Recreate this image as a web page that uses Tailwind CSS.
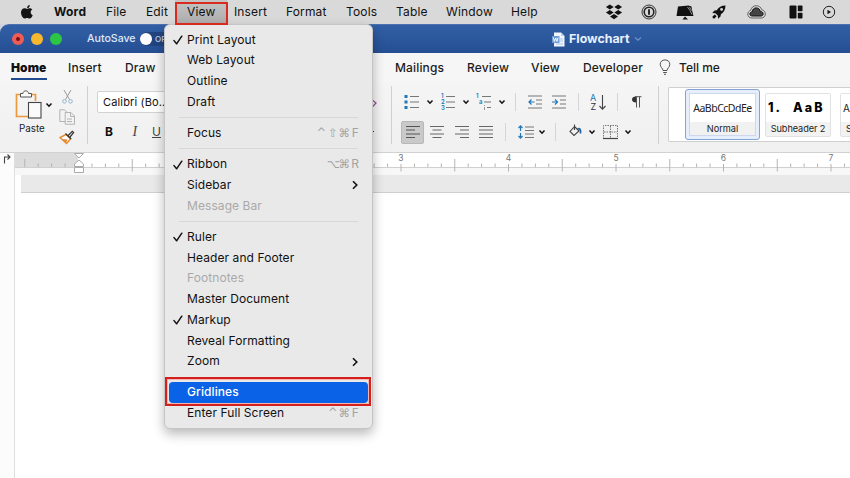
<!DOCTYPE html>
<html lang="en">
<head>
<meta charset="utf-8">
<title>Flowchart</title>
<script src="https://cdn.jsdelivr.net/npm/@tailwindcss/browser@4"></script>
</head>
<body class="w-[850px] h-[478px] overflow-hidden bg-white text-[#111] font-['Inter','Liberation_Sans',sans-serif] relative">
<svg class="hidden">
  <symbol id="chev" viewBox="0 0 8 6"><path d="M1.5 1.5 4 4.2 6.5 1.5" fill="none" stroke="#111" stroke-width="1.5"/></symbol>
  <symbol id="check" viewBox="0 0 10 10"><path d="M1 5.6 3.6 8.8 8.8 1.2" fill="none" stroke="#111" stroke-width="1.5" stroke-linecap="round" stroke-linejoin="round"/></symbol>
  <symbol id="sub" viewBox="0 0 6 10"><path d="M1 1.2 4.8 5 1 8.8" fill="none" stroke="#111" stroke-width="1.6"/></symbol>
</svg>

<!-- System menu bar -->
<header class="h-6 bg-[#d9d9d9] flex items-center text-[12px] tracking-[0.15px] leading-6 whitespace-nowrap">
  <svg class="ml-[20px] mr-[20px] w-[14px] h-4 shrink-0 -mt-px" viewBox="0 0 14 16"><path d="M9.8 1C8.300 1.100 6.900 2.500 7.100 4.200 8.700 4.200 9.900 2.700 9.800 1ZM7.200 5C6.500 5 5.600 4.300 4.500 4.300 2.600 4.300 1 5.900 1 8.600 1 11.400 2.900 14.600 4.600 14.600 5.500 14.600 6 14 7.100 14 8.200 14 8.600 14.600 9.500 14.600 11 14.600 12.300 12.400 12.700 11.200 11.500 10.700 10.700 9.700 10.700 8.300 10.700 7.100 11.300 6.200 12.300 5.600 11.600 4.700 10.600 4.300 9.700 4.300 8.600 4.300 7.900 5 7.200 5Z" fill="#151515"/></svg>
  <span class="w-[52px] font-bold tracking-[0.200px]">Word</span>
  <span class="w-[40px]">File</span>
  <span class="w-[29px]">Edit</span>
  <span class="w-[52px] h-6 mr-[7px] pl-[12px] bg-linear-to-b from-[#c4c4c4] to-[#adadad]">View</span>
  <span class="w-[52px]">Insert</span>
  <span class="w-[60px]">Format</span>
  <span class="w-[50px]">Tools</span>
  <span class="w-[50px]">Table</span>
  <span class="w-[65px]">Window</span>
  <span class="w-[94px]">Help</span>
  <svg class="w-[18px] h-[16px] shrink-0" viewBox="0 0 18 16" fill="#111"><path d="M4.800 0.500 8.700 3 4.800 5.500 0.900 3ZM13.200 0.500 17.100 3 13.200 5.500 9.300 3ZM4.800 5.900 8.700 8.400 4.800 10.900 0.900 8.400ZM13.200 5.900 17.100 8.400 13.200 10.900 9.300 8.400ZM9 10 13 12.600 9 15.200 5 12.600Z"/></svg>
  <svg class="ml-[18px] w-4 h-4 shrink-0" viewBox="0 0 16 16" fill="none" stroke="#222"><circle cx="8" cy="8" r="7" stroke-width=".9"/><circle cx="8" cy="8" r="4.800" stroke-width="1.600"/><path d="M8 5.200v5.600" stroke-width="1.900"/></svg>
  <svg class="ml-[19px] w-[18px] h-4 shrink-0" viewBox="0 0 18 16" fill="#111"><path d="M2 2.500 12.500 1.500 15.500 2.500 16 6 17.500 12 11.500 12 .500 12Z"/><path d="M6.500 15.500 9 12.500 12 15.500Z"/><path d="M11.500 3 14 6.500 16 10.500M13.500 3 15.500 6.500" stroke="#ccc" stroke-width=".700" fill="none"/></svg>
  <svg class="ml-[17px] w-4 h-4 shrink-0" viewBox="0 0 16 16" fill="#111"><path d="M14.500 1.500C10.500 1.500 7.500 3.500 5.800 6.200L3.500 6.600 1.300 9 4.400 9.300 6.800 11.600 7.100 14.700 9.500 12.500 9.900 10.200C12.700 8.500 14.500 5.500 14.500 1.500Z"/><circle cx="10.600" cy="5.400" r="1.400" fill="#d9d9d9"/><path d="M3.800 10.500 1.500 12.500 1.800 14.300 3.600 14.500 5.500 12.200"/></svg>
  <svg class="ml-[20px] w-[19px] h-4 shrink-0" viewBox="0 0 19 16"><path d="M5 14C2.400 14 .800 12.500 .800 10.300 .800 8.300 2 6.800 3.700 6.300 4.200 3.500 6.500 1.700 9.300 1.700 12 1.700 14 3.300 14.700 5.700 17 6.200 18.300 7.900 18.300 10 18.300 12.400 16.600 14 14 14Z" fill="none" stroke="#555" stroke-width=".9"/><path d="M5.300 12C3.800 12 2.900 11.300 2.900 10 2.900 8.700 3.900 7.900 5.200 7.900 5.300 5.400 7 3.900 9.200 3.900 11.400 3.900 13 5.300 13.200 7.400 15 7.400 16.100 8.400 16.100 9.800 16.100 11.200 15.200 12 13.900 12Z" fill="#444" stroke="#111" stroke-width="1"/></svg>
  <svg class="ml-[23px] w-[14px] h-[14px] shrink-0" viewBox="0 0 14 14" fill="#111"><rect x=".5" y=".5" width="7" height="13" rx="1"/><rect x="8.800" y=".5" width="4.700" height="5.700" rx=".8"/><rect x="8.800" y="7.700" width="4.700" height="5.800" rx=".8"/></svg>
  <svg class="ml-[19px] w-[14px] h-[14px] shrink-0" viewBox="0 0 14 14"><circle cx="7" cy="7" r="5.700" fill="none" stroke="#222" stroke-width="1"/><path d="M5.500 4.800 9 7 5.500 9.200Z" fill="#111"/></svg>
</header>

<div class="bg-[#d0d4da]">
<!-- Window title bar -->
<div class="h-[29px] rounded-tl-[9px] bg-linear-to-b from-[#315fa6] to-[#264f93] border-t border-[#4a71ad] flex items-center text-white whitespace-nowrap">
  <span class="ml-[12px] w-3 h-3 rounded-full bg-[#ee5c58] flex items-center justify-center"><i class="w-1 h-1 rounded-full bg-[#7a0d10]"></i></span>
  <span class="ml-[7px] w-3 h-3 rounded-full bg-[#f7b72f]"></span>
  <span class="ml-[7px] w-3 h-3 rounded-full bg-[#2dc544]"></span>
  <span class="ml-[25px] w-[52px] text-[10.600px] font-medium text-[#dfe8f7]">AutoSave</span>
  <span class="ml-[1px] w-[40px] h-[14px] rounded-full bg-[#22447f] flex items-center text-[8px] font-medium text-[#c9d5e9]"><i class="w-3 h-3 rounded-full bg-white mr-[3px]"></i>OFF</span>
  <svg class="ml-[372px] w-[13px] h-[15px]" viewBox="0 0 13 15"><path d="M2 .5h7l3.500 3.500V14.500H2Z" fill="#f1f6fd"/><path d="M9 .5V4h3.500" fill="#bcd0ec"/><path d="M8 7h3M8 9h3M4 12h7" stroke="#a9c4e8"/><rect y="4" width="7.500" height="7" fill="#6f9bd6"/><path d="m1.300 5.500 1.100 4 1.300-3.500 1.300 3.500 1.100-4" fill="none" stroke="#fff" stroke-width=".9"/></svg>
  <span class="ml-[4px] w-[61px] text-[12.400px] font-bold text-[#e8f0fc]">Flowchart</span>
  <svg class="ml-[4px] w-2 h-[6px]" viewBox="0 0 8 6"><path d="M1 1.500 4 4.300 7 1.500" fill="none" stroke="#6f93cb" stroke-width="1.200"/></svg>
</div>
</div>

<!-- Ribbon tabs -->
<nav class="h-[29px] bg-[#f6f6f6] flex text-[12px] font-medium leading-[29px] tracking-[0.150px] whitespace-nowrap text-[#1c1c1c]">
  <span class="ml-[11px] w-[57px] font-bold text-[#111]"><b class="inline-block h-[27px] border-b-2 border-[#1f4a8f] tracking-[0.100px]">Home</b></span>
  <span class="w-[57px]">Insert</span>
  <span class="w-[270px]">Draw</span>
  <span class="w-[72px]">Mailings</span>
  <span class="w-[64px]">Review</span>
  <span class="w-[52px]">View</span>
  <span class="w-[76px]">Developer</span>
  <svg class="mt-[6px] w-[12px] h-[17px]" viewBox="0 0 12 17" fill="none" stroke="#555"><path d="M4 11.500C4 9.300 1.200 8.300 1.200 5.300 1.200 2.600 3.300.900 6 .900S10.800 2.600 10.800 5.300C10.800 8.300 8 9.300 8 11.500ZM4.200 13.500h3.600M5 15.300h2"/></svg>
  <span class="ml-[8px] tracking-normal">Tell me</span>
</nav>

<!-- Ribbon -->
<section class="h-[71px] bg-linear-to-b from-[#f5f5f5] to-[#f0f0f0] border-b border-[#d2d2d2] flex items-start">
  <div class="ml-[15px] mt-[7px] w-[40px]">
    <div class="flex items-center">
      <svg class="w-[28px] h-[31px] shrink-0" viewBox="0 0 28 31" fill="none"><path d="M6 5.500H1.500V27.500H13M15 5.500H20.500V12" stroke="#ea9a3e" stroke-width="1.700"/><path d="M5.500 8V4.500H8C8 1 13.500 1 13.500 4.500H16.500V8Z" fill="#fafafa" stroke="#555"/><rect x="13.500" y="13.500" width="12.500" height="15.500" fill="#fafafa" stroke="#444" stroke-width="1.100"/></svg>
      <svg class="ml-[2px] w-2 h-[6px] shrink-0"><use href="#chev"/></svg>
    </div>
    <p class="pl-[4px] text-[9.800px] leading-[14px] text-[#222] mt-[2px]">Paste</p>
  </div>
  <div class="ml-[4px] mt-[7px] w-[28px]">
    <svg class="ml-[3px] w-[11px] h-[16px]" viewBox="0 0 11 16" fill="none"><path d="M2 1 7.500 10.500M9 1 3.500 10.500" stroke="#999"/><circle cx="2.500" cy="12.300" r="1.800" stroke="#8fb5cf"/><circle cx="8.500" cy="12.300" r="1.800" stroke="#8fb5cf"/></svg>
    <svg class="mt-[4px] w-[17px] h-[16px]" viewBox="0 0 17 16" fill="#f3f3f3" stroke="#b2b2b2"><path d="M.800.800H5.500L8 3.300V12.500H.800Z"/><path d="M6.200 3.500H12L15.500 7V15.200H6.200ZM11.500 3.500V7.500H15.500M8 10h5M8 12.500h5"/></svg>
    <svg class="mt-[5px] w-[16px] h-[15px]" viewBox="0 0 16 15" fill="none"><path d="M7 4.500 1 7.500 7.500 13.500 11.500 9Z" fill="#fff" stroke="#e9892b" stroke-width="1.400"/><path d="M3 9 8.500 9.500 7 13" fill="#e9892b"/><path d="M6.500 3.500 12.200 9M9.200 5.500 13.300 1.300 14.600 2.600 11 7" stroke="#333" stroke-width="1.200" fill="#f3f3f3"/></svg>
  </div>
  <i class="mt-[4px] w-px h-[58px] bg-[#d0d0d0]"></i>
  <div class="ml-[9px] mt-[9px] w-[294px]">
    <div class="w-[150px] h-[22px] rounded-[2px] bg-white border border-[#d2d2d2] text-[11px] leading-5 pl-[5px] tracking-[0.150px]">Calibri (Bo...</div>
    <div class="mt-[8px] flex text-[12px] leading-[22px]"><b class="ml-[8px] w-[24px]">B</b><span class="w-[23px] italic font-['Liberation_Serif',serif] text-[14px] text-[#444]">&nbsp;I</span><span class="underline text-[#444]">U</span></div>
  </div>
  <i class="mt-[4px] w-px h-[58px] bg-[#d0d0d0]"></i>
  <div class="w-[266px] mt-[8px]">
    <!-- Lists and indents -->
    <div class="flex items-center h-6 text-[#555]">
      <svg class="ml-[12px] w-4 h-4" viewBox="0 0 16 16"><path d="M6 2.500h9M6 8h9M6 13.500h9" stroke="#777"/><path d="M.500 1h3v3h-3zM.500 6.500h3v3h-3zM.500 12h3v3h-3z" fill="#2277b8"/></svg>
      <svg class="ml-[6px] w-2 h-[6px]"><use href="#chev"/></svg>
      <svg class="ml-[6px] w-4 h-[18px]" viewBox="0 0 16 18"><path d="M6 3.500h9M6 9h9M6 14.500h9" stroke="#777"/><g fill="#2277b8" font-family="Inter" font-weight="600" font-size="6"><text x="1" y="5">1</text><text x="1" y="11">2</text><text x="1" y="17">3</text></g></svg>
      <svg class="ml-[6px] w-2 h-[6px]"><use href="#chev"/></svg>
      <svg class="ml-[6px] w-4 h-[18px]" viewBox="0 0 16 18"><path d="M6 3.500h9M8 9h7M11 14.500h4" stroke="#777"/><g fill="#2277b8" font-family="Inter" font-weight="600" font-size="6"><text x="0" y="5">1</text><text x="3" y="11">a</text></g><path d="M8.500 12v1M8.500 14v3" stroke="#999"/></svg>
      <svg class="ml-[6px] w-2 h-[6px]"><use href="#chev"/></svg>
      <i class="ml-[9px] w-px h-[18px] bg-[#d5d5d5]"></i>
      <svg class="ml-[12px] w-[14px] h-4" viewBox="0 0 14 16" fill="none"><path d="M0 2h14M8 6h6M8 10h6M0 14h14" stroke="#777"/><path d="M6.500 8H1M3.500 5.500 1 8l2.500 2.500" stroke="#2277b8" stroke-width="1.200"/></svg>
      <svg class="ml-[10px] w-[14px] h-4" viewBox="0 0 14 16" fill="none"><path d="M0 2h14M8 6h6M8 10h6M0 14h14" stroke="#777"/><path d="M0 8h5.500M3 5.500 5.500 8 3 10.500" stroke="#2277b8" stroke-width="1.200"/></svg>
      <i class="ml-[12px] w-px h-[18px] bg-[#d5d5d5]"></i>
      <svg class="ml-[11px] w-[17px] h-[18px]" viewBox="0 0 17 18"><g font-family="Inter" font-size="9"><text x="0" y="7.500" fill="#2277b8">A</text><text x=".5" y="17" fill="#333">Z</text></g><path d="M12.500 2V16M9.500 13 12.500 16.200 15.500 13" fill="none" stroke="#444" stroke-width="1.100"/></svg>
      <i class="ml-[10px] w-px h-[18px] bg-[#d5d5d5]"></i>
      <svg class="ml-[13px] w-[11px] h-[14px]" viewBox="0 0 11 14"><path d="M5 1.500C2.500 1.500 1 2.700 1 4.500S2.500 7.500 5 7.500Z" fill="#333"/><path d="M4 1.700h6.500M5.500 1.700V12.500M8.500 1.700V12.500" stroke="#555" fill="none"/></svg>
    </div>
    <!-- Alignment -->
    <div class="flex items-center h-6 mt-[6px]">
      <span class="ml-[9px] w-[23px] h-[23px] rounded-[2px] bg-[#c9c9c9] border border-[#b8b8b8] flex items-center justify-center"><svg class="w-[14px] h-[14px] shrink-0" viewBox="0 0 14 14"><path d="M0 1.500h14M0 5h9M0 9h14M0 12.500h9" stroke="#555" stroke-width="1.100"/></svg></span>
      <svg class="ml-[6px] w-[14px] h-[14px]" viewBox="0 0 14 14"><path d="M0 1.500h14M2.500 5h9M0 9h14M2.500 12.500h9" stroke="#666"/></svg>
      <svg class="ml-[11px] w-[14px] h-[14px]" viewBox="0 0 14 14"><path d="M0 1.500h14M5 5h9M0 9h14M5 12.500h9" stroke="#666"/></svg>
      <svg class="ml-[10px] w-[14px] h-[14px]" viewBox="0 0 14 14"><path d="M0 1.500h14M0 5h14M0 9h14M0 12.500h14" stroke="#666"/></svg>
      <i class="ml-[12px] w-px h-[18px] bg-[#d5d5d5]"></i>
      <svg class="ml-[12px] w-4 h-4" viewBox="0 0 16 16" fill="none"><path d="M7 3h9M7 6.500h9M7 10h9M7 13.500h9" stroke="#777"/><path d="M2.500 7V2M.500 4 2.500 1.800 4.500 4M2.500 9v5M.500 12 2.500 14.200 4.500 12" stroke="#2277b8" stroke-width="1.200"/></svg>
      <svg class="ml-[4px] w-2 h-[6px]"><use href="#chev"/></svg>
      <i class="ml-[9px] w-px h-[18px] bg-[#d5d5d5]"></i>
      <svg class="ml-[13px] w-[14px] h-[14px] -mt-[2px]" viewBox="0 0 14 14" fill="none"><path d="M5.500 2.500 10 7 5 11.500 1 7.500 5.500 2.500V.5M5.500 2.500V6" stroke="#444" stroke-width="1.100"/><path d="M8.500 5C11 4 12 6 11.500 9.500" stroke="#1f62a8" stroke-width="1.700"/></svg>
      <svg class="ml-[5px] w-2 h-[6px]"><use href="#chev"/></svg>
      <svg class="ml-[7px] w-[15px] h-[16px]" viewBox="0 0 15 16" fill="none"><path d="M.500 15V1.500H14.500V15M7.500 2V14M1 8H14" stroke="#777" stroke-dasharray="1.500 1"/><path d="M0 14.500h15" stroke="#444" stroke-width="1.200"/></svg>
      <svg class="ml-[6px] w-2 h-[6px]"><use href="#chev"/></svg>
    </div>
  </div>
  <i class="mt-[4px] w-px h-[58px] bg-[#d0d0d0]"></i>
  <!-- Style gallery -->
  <div class="ml-[9px] mt-[5px] w-[182px] h-[55px] bg-white border border-r-0 border-[#d0d0d0] rounded-l-[2px] flex items-center overflow-hidden whitespace-nowrap text-center text-[9.200px] text-[#222] shrink-0">
    <div class="ml-[16px] w-[75px] h-[51px] rounded-[3px] bg-[#e6eefb] border border-[#86a3d3] p-[3px] shrink-0">
      <div class="h-full border border-[#cdd8ec] bg-[#f1f1f1]"><p class="bg-white h-[28px] leading-[28px] text-[10.500px] tracking-[-0.500px] font-['Noto_Sans',sans-serif]"><span class="-mx-1">AaBbCcDdEe</span></p><p class="leading-[13px]">Normal</p></div>
    </div>
    <div class="ml-[5px] w-[66px] h-[44px] border border-[#e2e2e2] rounded-[2px] bg-[#f2f2f2] shrink-0"><p class="bg-white h-[28px] leading-[28px] text-[12.500px] font-extrabold text-black text-left pl-[2px] flex"><span class="w-[25px] tracking-[2px]">1.</span><span class="tracking-[2.200px]">AaB</span></p><p class="leading-[13px] tracking-[-0.100px]">Subheader 2</p></div>
    <div class="ml-[9px] w-[66px] h-[44px] border border-[#e2e2e2] rounded-[2px] bg-[#f2f2f2] shrink-0 text-left"><p class="bg-white h-[28px] leading-[28px] text-[10px] pl-[2px]">A</p><p class="leading-[13px] pl-[5px] text-[9px]">S</p></div>
  </div>
</section>

<!-- Ruler -->
<svg class="block w-[850px] h-[22px]" viewBox="0 0 850 22">
  <rect width="850" height="22" fill="#f7f7f7"/>
  <rect width="14" height="22" fill="#fcfcfc"/>
  <rect x="78" width="772" height="14" fill="#fff"/><rect x="15" width="63" height="14" fill="#dcdcdc"/>
  <path d="M15 14.500H850" stroke="#d0d0d0"/><path d="M14.500 0V22" stroke="#dedede"/>
  <path d="M4.500 10.500V4H9.500M7.500 1.500 10 4 7.500 6.500" fill="none" stroke="#444" stroke-width="1.100"/>
  <g id="ticks" stroke="#b4b4b4" fill="#777" font-family="Inter" font-size="8.500" text-anchor="middle"></g>
  <path d="M74.500 .500H83.500L79 5ZM79 7 83.500 11V13.500H74.500V11ZM74.500 14.500H83.500V19.500H74.500Z" fill="#fff" stroke="#aaa"/>
</svg>

<!-- Page canvas -->
<main class="flex h-[303px]">
  <i class="w-[15px] bg-[#fcfcfc] border-r border-[#dedede]"></i>
  <div class="flex-1 pl-[6px]"><div class="h-[18px] bg-[#e9e9e9] border-b border-[#cfcfcf]"></div></div>
</main>

<!-- Edge of the clear-formatting icon beside the open menu -->
<svg class="absolute left-[367px] top-[97px] w-[12px] h-[14px]" viewBox="0 0 12 14"><path d="M1 9 6 3.500 9 6 4 11.500Z" fill="#f5f5f5" stroke="#96459f" stroke-width="1.200"/></svg>
<i class="absolute left-[372px] top-[131px] w-[2px] h-px bg-[#333]"></i>

<!-- Open View menu -->
<div class="absolute left-[164px] top-6 w-[209px] h-[404.500px] rounded-[6px] bg-[#e9e9e9] border border-[#c5c5c5] pt-[4.600px] shadow-[0_5px_12px_rgba(0,0,0,0.28)] text-[12px] tracking-[0.080px]">
  <div id="menu"></div>
</div>
<i class="absolute left-[175px] top-[2px] w-[53px] h-[23px] border-2 border-[#d92a20]"></i>
<i class="absolute left-[165px] top-[377px] w-[206px] h-[29px] border-2 border-[#d3201c] shadow-[inset_0_0_0_1px_#f3b5b0]"></i>

<script>
const items = [['Print Layout','c'],['Web Layout'],['Outline'],['Draft'],0,['Focus','','^⇧⌘F'],0,['Ribbon','c','⌥⌘R'],['Sidebar','s'],['Message Bar','d'],0,['Ruler','c'],['Header and Footer'],['Footnotes','d'],['Master Document'],['Markup','c'],['Reveal Formatting'],['Zoom','s'],1,['Gridlines','h'],['Enter Full Screen','','^⌘F']];
document.getElementById('menu').innerHTML = items.map(i => {
  if (i === 1) return '<div class="h-[10.400px]"></div>';
  if (!i) return '<div class="h-[10.400px] pt-[4.500px] px-[14px]"><div class="h-px bg-[#d8d8d8]"></div></div>';
  const [t, f, k] = i;
  const tone = f === 'h' ? 'bg-[#0a62e6] text-white font-medium' : f === 'd' ? 'text-[#a9a9a9]' : '';
  return '<div class="mx-[4px] h-[20.760px] leading-[20.760px] rounded-[4px] flex items-center ' + tone + '">' +
    '<span class="w-[18px] pl-[4px]">' + (f === 'c' ? '<svg class="w-[10px] h-[10px]"><use href="#check"/></svg>' : '') + '</span>' +
    '<span class="flex-1">' + t + '</span>' +
    (k ? '<span class="flex pr-[9px] text-[#a3a3a3]">' + [...k].map((c, n, a) => '<span class="' + (n === a.length - 1 ? 'w-[9px] text-right' : "w-[11.500px] text-center font-['DejaVu_Sans',sans-serif] text-[11.500px] tracking-normal") + '">' + c + '</span>').join('') + '</span>' : '') +
    (f === 's' ? '<svg class="w-[6px] h-[10px] mr-[10px]"><use href="#sub"/></svg>' : '') + '</div>';
}).join('');

let ticks = '';
const inch = 107.5, zero = 78.5;
for (let n = -4; n <= 57; n++) {
  if (n === 0) continue;
  const x = zero + n * inch / 8;
  if (n % 8 === 0) ticks += `<path d="M${x} 14V18.500"/><path d="M${x} 11V14"/><text stroke="none" x="${x}" y="8">${n / 8}</text>`;
  else if (n % 4 === 0) ticks += `<path d="M${x} 6V${n > 0 ? 18.500 : 14}"/>`;
  else ticks += `<path d="M${x} 10.500V14"/>`;
}
document.getElementById('ticks').innerHTML = ticks;
</script>
</body>
</html>
